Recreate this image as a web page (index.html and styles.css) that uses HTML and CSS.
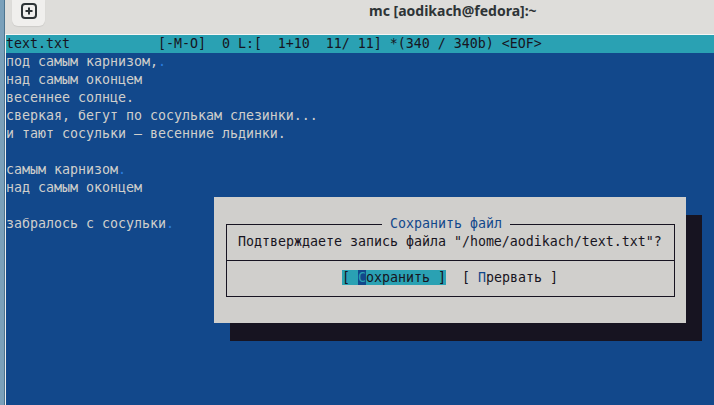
FILE: index.html
```html
<!DOCTYPE html>
<html>
<head>
<meta charset="utf-8">
<link rel="stylesheet" href="styles.css">
</head>
<body>
<div class="window">
  <header class="titlebar">
    <div class="newtab">
      <svg class="icon" width="16" height="16" viewBox="0 0 16 16">
        <rect x="1" y="1" width="14" height="14" rx="3" fill="none" stroke="#2e3436" stroke-width="2"/>
        <path d="M8 4.5v7M4.5 8h7" stroke="#2e3436" stroke-width="2" fill="none"/>
      </svg>
    </div>
    <div class="title">mc [aodikach@fedora]:~</div>
  </header>
  <main class="term">
    <div class="row status">text.txt           [-M-O]  0 L:[  1+10  11/ 11] *(340 / 340b) &lt;EOF&gt;</div>
    <div class="row">под самым карнизом,<span class="hl">.</span></div>
    <div class="row">над самым оконцем</div>
    <div class="row">весеннее солнце.</div>
    <div class="row">сверкая, бегут по сосулькам слезинки...</div>
    <div class="row">и тают сосульки – весенние льдинки.</div>
    <div class="row"></div>
    <div class="row">самым карнизом<span class="hl">.</span></div>
    <div class="row">над самым оконцем</div>
    <div class="row"></div>
    <div class="row">забралось с сосульки<span class="hl">.</span></div>

    <div class="dialog">
      <div class="frame">
        <div class="dtitle"> Сохранить файл </div>
        <div class="msg">Подтверждаете запись файла "/home/aodikach/text.txt"?</div>
        <div class="sep"></div>
        <div class="buttons"><span class="sel">[ <span class="hk">С</span>охранить ]</span>  <span>[ <span class="hk2">П</span>рервать ]</span></div>
      </div>
    </div>
  </main>
</div>
</body>
</html>
```
FILE: styles.css
```css
html, body {
  margin: 0;
  padding: 0;
}
body {
  width: 714px;
  height: 405px;
  overflow: hidden;
  background: #7aa0ba;
}
.window {
  margin-left: 4px;
  height: 405px;
  border-left: 1px solid #4d7590;
  display: flex;
  flex-direction: column;
  background: #deddda;
}
.titlebar {
  height: 34px;
  flex: none;
  border-bottom: 1px solid #f6f6f5;
  display: flex;
  align-items: flex-start;
  background: #deddda;
}
.newtab {
  margin-left: 7px;
  width: 33px;
  height: 26px;
  background: #f0efed;
  border-radius: 0 0 6px 6px;
  box-shadow: 0 1px 1px rgba(0,0,0,0.08);
  display: flex;
  justify-content: center;
  padding-top: 3px;
  box-sizing: border-box;
}
.icon {
  display: block;
}
.title {
  margin-left: 324px;
  margin-top: 1px;
  font-family: "Noto Sans", "Open Sans", sans-serif;
  font-weight: bold;
  font-size: 14px;
  line-height: 19px;
  color: #2e3436;
}
.term {
  flex: 1;
  position: relative;
  background: #12488b;
  border-left: 1px solid #eeeeee;
  font-family: "DejaVu Sans Mono", monospace;
  font-size: 13.29px;
  color: #d0cfcc;
}
.row {
  height: 18px;
  line-height: 18px;
  white-space: pre;
}
.status {
  background: #2aa1b3;
  color: #171421;
}
.hl {
  color: #2a7bde;
}
.dialog {
  position: absolute;
  left: 208px;
  top: 162px;
  width: 472px;
  height: 126px;
  box-sizing: border-box;
  padding: 27px 0 0 12px;
  background: #d0cfcc;
  box-shadow: 16px 18px 0 #171421;
}
.frame {
  position: relative;
  width: 449px;
  height: 73px;
  box-sizing: border-box;
  border: 1px solid #171421;
  color: #171421;
}
.dtitle {
  position: absolute;
  top: -10px;
  left: 155px;
  height: 18px;
  line-height: 18px;
  white-space: pre;
  background: #d0cfcc;
  color: #12488b;
}
.msg {
  margin-top: 8px;
  padding-left: 11px;
  height: 18px;
  line-height: 18px;
  white-space: pre;
}
.sep {
  margin-top: 9px;
  height: 1px;
  background: #171421;
}
.buttons {
  margin-top: 8px;
  padding-left: 115px;
  height: 18px;
  line-height: 18px;
  white-space: pre;
}
.sel {
  background: #2aa1b3;
}
.hk {
  background: #12488b;
  color: #2aa1b3;
}
.hk2 {
  color: #12488b;
}
```
